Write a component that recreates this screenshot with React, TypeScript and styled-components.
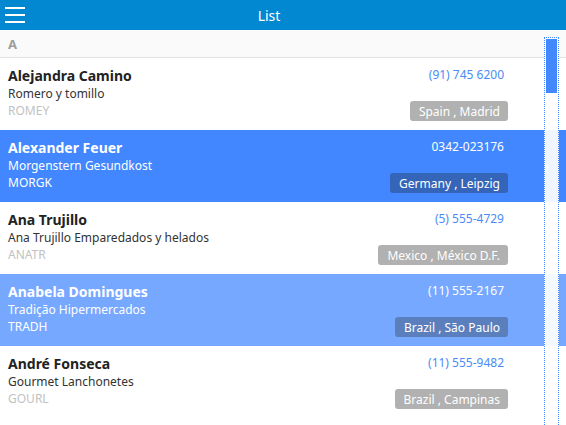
import { createGlobalStyle } from "styled-components";
import styled from "styled-components";

const GlobalStyle = createGlobalStyle`
  html, body {
    margin: 0;
    padding: 0;
    background: #fff;
    font-family: "Noto Sans", "Open Sans", sans-serif;
  }
  * { box-sizing: border-box; }
`;

type Customer = {
  name: string;
  company: string;
  code: string;
  phone: string;
  location: string;
  state?: "selected" | "hover";
};

const customers: Customer[] = [
  { name: "Alejandra Camino", company: "Romero y tomillo", code: "ROMEY", phone: "(91) 745 6200", location: "Spain , Madrid" },
  { name: "Alexander Feuer", company: "Morgenstern Gesundkost", code: "MORGK", phone: "0342-023176", location: "Germany , Leipzig", state: "selected" },
  { name: "Ana Trujillo", company: "Ana Trujillo Emparedados y helados", code: "ANATR", phone: "(5) 555-4729", location: "Mexico , México D.F." },
  { name: "Anabela Domingues", company: "Tradição Hipermercados", code: "TRADH", phone: "(11) 555-2167", location: "Brazil , São Paulo", state: "hover" },
  { name: "André Fonseca", company: "Gourmet Lanchonetes", code: "GOURL", phone: "(11) 555-9482", location: "Brazil , Campinas" },
];

const Screen = styled.div`
  position: relative;
  width: 566px;
  height: 425px;
  overflow: hidden;
  background: #fff;
`;

const TopBar = styled.header`
  height: 30px;
  background: #0288d1;
  display: flex;
  align-items: center;
  padding-right: 28px;
  position: relative;
`;

const MenuButton = styled.button`
  width: 28px;
  height: 30px;
  border: 0;
  background: transparent;
  padding: 0 0 0 5px;
  display: flex;
  flex-direction: column;
  justify-content: center;
  gap: 5px;
  position: absolute;
  left: 0;
  top: 0;
`;

const MenuLine = styled.span`
  display: block;
  width: 20px;
  height: 2px;
  background: #fff;
`;

const Title = styled.h1`
  flex: 1;
  margin: 0;
  text-align: center;
  color: #fff;
  font-size: 14px;
  font-weight: 400;
`;

const GroupHeader = styled.div`
  height: 28px;
  padding-left: 8px;
  display: flex;
  align-items: center;
  background: #fafafa;
  border-bottom: 1px solid #e4e4e4;
  color: #9e9e9e;
  font-weight: 700;
  font-size: 13px;
`;

const Row = styled.div<{ $state?: "selected" | "hover" }>`
  height: 72px;
  display: flex;
  background: ${(p) => (p.$state === "selected" ? "#4287ff" : p.$state === "hover" ? "#76a8ff" : "#fff")};
  color: ${(p) => (p.$state ? "#fff" : "#222")};
`;

const Main = styled.div`
  flex: 1;
  padding: 8px 0 0 8px;
  display: flex;
  flex-direction: column;
`;

const Name = styled.div`
  font-size: 14px;
  font-weight: 700;
  line-height: 19px;
`;

const Company = styled.div<{ $light: boolean }>`
  font-size: 12px;
  line-height: 17px;
  color: ${(p) => (p.$light ? "#fff" : "#333")};
`;

const Code = styled.div<{ $light: boolean }>`
  font-size: 12px;
  line-height: 17px;
  color: ${(p) => (p.$light ? "#fff" : "#c2c2c2")};
`;

const Side = styled.div`
  width: 200px;
  padding: 8px 36px 0 0;
  display: flex;
  flex-direction: column;
  align-items: flex-end;
`;

const Phone = styled.div<{ $light: boolean }>`
  font-size: 12px;
  line-height: 18px;
  padding-right: 4px;
  color: ${(p) => (p.$light ? "#fff" : "#4a8cf7")};
`;

const Badge = styled.span<{ $state?: "selected" | "hover" }>`
  margin-top: 17px;
  height: 20px;
  padding: 0 8px 0 9px;
  border-radius: 3px;
  display: flex;
  align-items: center;
  font-size: 12px;
  color: #fff;
  background: ${(p) => (p.$state === "selected" ? "#3565b8" : p.$state === "hover" ? "#5b7fbd" : "#b1b1b1")};
`;

const Chevron = styled.div`
  width: 22px;
  display: flex;
  align-items: center;
  justify-content: flex-start;
  color: #eef2f8;
  font-size: 16px;
`;

const Track = styled.div`
  position: absolute;
  left: 544px;
  top: 37px;
  width: 15px;
  height: 400px;
  border: 1px dotted #4488ff;
  background: rgba(255, 255, 255, 0.92);
  padding: 1px;
`;

const Thumb = styled.div`
  height: 54px;
  background: #4488ff;
`;

export default function App() {
  return (
    <Screen>
      <GlobalStyle />
      <TopBar>
        <MenuButton aria-label="menu">
          <MenuLine />
          <MenuLine />
          <MenuLine />
        </MenuButton>
        <Title>List</Title>
      </TopBar>
      <GroupHeader>A</GroupHeader>
      {customers.map((c) => {
        const light = !!c.state;
        return (
          <Row key={c.code} $state={c.state}>
            <Main>
              <Name>{c.name}</Name>
              <Company $light={light}>{c.company}</Company>
              <Code $light={light}>{c.code}</Code>
            </Main>
            <Side>
              <Phone $light={light}>{c.phone}</Phone>
              <Badge $state={c.state}>{c.location}</Badge>
            </Side>
            <Chevron>›</Chevron>
          </Row>
        );
      })}
      <Track>
        <Thumb />
      </Track>
    </Screen>
  );
}
